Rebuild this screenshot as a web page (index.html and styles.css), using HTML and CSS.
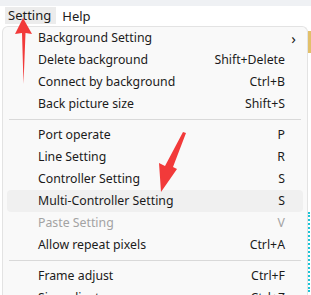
FILE: index.html
```html
<!DOCTYPE html>
<html lang="en">
<head>
<meta charset="UTF-8">
<meta name="viewport" content="width=device-width, initial-scale=1.0">
<title>Setting menu</title>
<link rel="stylesheet" href="styles.css">
</head>
<body>

<div class="topstrip"></div>
<div class="menubar">
  <span class="menubar-item active">Setting</span>
  <span class="menubar-item">Help</span>
</div>

<div class="workarea">
  <div class="gutter"></div>
  <div class="menu">
    <div class="item"><span>Background Setting</span><span class="submenu">&#x203A;</span></div>
    <div class="item"><span>Delete background</span><span>Shift+Delete</span></div>
    <div class="item"><span>Connect by background</span><span>Ctrl+B</span></div>
    <div class="item"><span>Back picture size</span><span>Shift+S</span></div>
    <div class="sep"></div>
    <div class="item"><span>Port operate</span><span>P</span></div>
    <div class="item"><span>Line Setting</span><span>R</span></div>
    <div class="item"><span>Controller Setting</span><span>S</span></div>
    <div class="item hover"><span>Multi-Controller Setting</span><span>S</span></div>
    <div class="item disabled"><span>Paste Setting</span><span>V</span></div>
    <div class="item"><span>Allow repeat pixels</span><span>Ctrl+A</span></div>
    <div class="sep"></div>
    <div class="item"><span>Frame adjust</span><span>Ctrl+F</span></div>
    <div class="item"><span>Size adjust</span><span>Ctrl+Z</span></div>
  </div>
  <div class="side">
    <div class="side-block"></div>
    <div class="side-dots"></div>
  </div>
</div>

<!-- annotation arrows drawn over the screenshot -->
<svg class="arrows" width="311" height="295" viewBox="0 0 311 295">
  <polygon points="23,18 32,34 25.5,33 23.5,84 22,33 15,34" fill="#f23a3a"/>
  <polygon points="186,133 173,167 177,169 161,192 159,163 165,166 183,132" fill="#f23a3a"/>
</svg>

</body>
</html>
```

FILE: styles.css
```css
body {
  margin: 0;
  width: 311px;
  height: 295px;
  overflow: hidden;
  font-family: 'Segoe UI', 'Noto Sans', 'Open Sans', sans-serif;
  font-size: 12.3px;
  color: #1b1b1b;
  background-color: #fff;
  position: relative;
}
.topstrip {
  height: 6px;
  background-color: #eff1f4;
}
.menubar {
  display: flex;
  height: 20px;
  padding-left: 5px;
  background-color: #fff;
}
.menubar-item {
  display: flex;
  align-items: center;
  padding: 0 5px 0 3px;
  margin-right: 3px;
  font-size: 13px;
  line-height: 17px;
}
.menubar-item.active {
  background-color: #ececec;
  margin-top: 1px;
  height: 17px;
}
.workarea {
  display: flex;
  height: 269px;
  overflow: hidden;
}
.gutter {
  width: 2px;
}
.menu {
  width: 296px;
  background-color: #f9f9f9;
  border: 1px solid #e3e3e3;
  border-bottom: none;
  border-radius: 6px 6px 0 0;
  padding: 0 4px;
}
.item {
  display: flex;
  justify-content: space-between;
  align-items: center;
  height: 22px;
  padding: 0 18px 1px 31px;
  box-sizing: border-box;
  border-radius: 4px;
  white-space: nowrap;
}
.item.hover {
  background-color: #f0f0f0;
}
.item.disabled {
  color: #a3a3a3;
}
.submenu {
  margin-right: -11px;
  font-size: 15px;
}
.sep {
  height: 1px;
  margin: 4px 2px 4px 2px;
  background-color: #d9d9d9;
}
.side {
  flex: 1;
  display: flex;
  flex-direction: column;
  align-items: flex-end;
}
.side-block {
  width: 3px;
  height: 22px;
  margin-top: 5px;
  background-color: #e2c06a;
}
.side-dots {
  width: 0;
  height: 80px;
  margin-top: 159px;
  margin-right: 1px;
  border-left: 2px dotted #1cc4d6;
}
.arrows {
  position: absolute;
  left: 0;
  top: 0;
  pointer-events: none;
}
```
